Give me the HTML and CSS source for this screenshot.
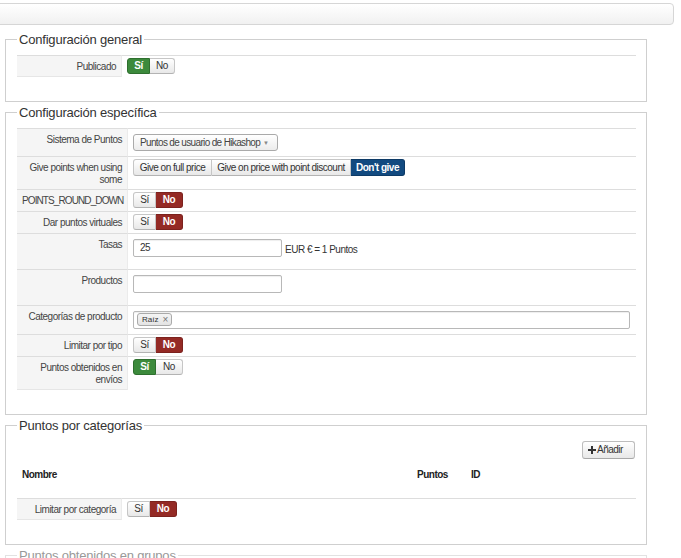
FILE: index.html
```html
<!DOCTYPE html>
<html lang="es">
<head>
<meta charset="utf-8">
<title>Puntos</title>
<link rel="stylesheet" href="styles.css">
</head>
<body>
<div class="topbar"></div>
<div class="page">
  <fieldset class="fs">
    <legend>Configuración general</legend>
    <table class="adm">
      <tr>
        <td class="key k-sm">Publicado</td>
        <td class="val"><span class="grp"><span class="b si on-g">Sí</span><span class="b no no-sm">No</span></span></td>
      </tr>
    </table>
  </fieldset>

  <fieldset class="fs">
    <legend>Configuración específica</legend>
    <table class="adm">
      <tr>
        <td class="key k-lg">Sistema de Puntos</td>
        <td class="val"><span class="select"><span>Puntos de usuario de Hikashop</span><span class="arrow">▼</span></span></td>
      </tr>
      <tr>
        <td class="key k-lg">Give points when using some</td>
        <td class="val"><span class="grp grp-give"><span class="b g1">Give on full price</span><span class="b g2">Give on price with point discount</span><span class="b g3 on-b">Don't give</span></span></td>
      </tr>
      <tr>
        <td class="key k-lg caps">POINTS_ROUND_DOWN</td>
        <td class="val"><span class="grp"><span class="b si">Sí</span><span class="b no on-r">No</span></span></td>
      </tr>
      <tr>
        <td class="key k-lg">Dar puntos virtuales</td>
        <td class="val"><span class="grp"><span class="b si">Sí</span><span class="b no on-r">No</span></span></td>
      </tr>
      <tr>
        <td class="key k-lg">Tasas</td>
        <td class="val"><span class="input">25</span><span class="unit">EUR € = 1 Puntos</span></td>
      </tr>
      <tr>
        <td class="key k-lg">Productos</td>
        <td class="val"><span class="input"></span></td>
      </tr>
      <tr>
        <td class="key k-lg">Categorías de producto</td>
        <td class="val"><span class="input input-wide"><span class="tag">Raíz <span class="x">×</span></span></span></td>
      </tr>
      <tr>
        <td class="key k-lg">Limitar por tipo</td>
        <td class="val"><span class="grp"><span class="b si">Sí</span><span class="b no on-r">No</span></span></td>
      </tr>
      <tr>
        <td class="key k-lg">Puntos obtenidos en envíos</td>
        <td class="val"><span class="grp"><span class="b si on-g">Sí</span><span class="b no">No</span></span></td>
      </tr>
    </table>
  </fieldset>

  <fieldset class="fs">
    <legend>Puntos por categorías</legend>
    <div class="toolbar">
      <span class="btn-add"><svg class="plus" viewBox="0 0 8 8" width="8" height="8" aria-hidden="true"><path d="M3 0h2v3h3v2H5v3H3V5H0V3h3z" fill="#333"/></svg>Añadir</span>
    </div>
    <table class="list">
      <tr>
        <th class="c-name">Nombre</th>
        <th class="c-pts">Puntos</th>
        <th>ID</th>
      </tr>
    </table>
    <table class="adm">
      <tr>
        <td class="key k-sm">Limitar por categoría</td>
        <td class="val"><span class="grp"><span class="b si">Sí</span><span class="b no on-r">No</span></span></td>
      </tr>
    </table>
  </fieldset>

  <fieldset class="fs fs-dim">
    <legend>Puntos obtenidos en grupos</legend>
    <div class="spacer"></div>
  </fieldset>
</div>
</body>
</html>
```

FILE: styles.css
```css
* { box-sizing: border-box; }

body {
  margin: 0;
  background: #fff;
  color: #333;
  font-family: "Liberation Sans", Arial, sans-serif;
  font-size: 10px;
  letter-spacing: -0.5px;
}

.topbar {
  margin: 3px 0 7px -6px;
  width: 680px;
  height: 22px;
  border: 1px solid #d6d6d6;
  border-radius: 4px;
  background: linear-gradient(#ffffff, #f1f1f1);
}

.page {
  padding-left: 5px;
  width: 647px;
}

.fs {
  margin: 0 0 3px;
  padding: 8px 10px 24px 11px;
  border: 1px solid #cfcfcf;
  min-width: 0;
}

.fs legend {
  padding: 0 2px;
  font-size: 13px;
  line-height: 15px;
  letter-spacing: -0.2px;
  color: #333;
}

.fs-dim { border-color: #e2e2e2; }
.fs-dim legend { color: #999; }
.spacer { height: 40px; }

.adm {
  width: 100%;
  table-layout: fixed;
  border-collapse: separate;
  border-spacing: 0;
}

.adm td {
  border-top: 1px solid #dddddd;
  vertical-align: top;
}

.val {
  padding: 2px 5px 3px;
  line-height: 12px;
}

.key {
  background: #f5f5f5;
  border-right: 1px solid #ebebeb;
  text-align: right;
  padding: 5px 5px 3px;
  line-height: 12px;
  color: #444;
}

.key.caps { letter-spacing: -0.9px; }

.adm tr:last-child .key { border-bottom: 1px solid #e6e6e6; }

.k-sm { width: 105px; }
.k-lg { width: 111px; }

/* button groups */
.grp {
  display: inline-flex;
  vertical-align: top;
  white-space: nowrap;
}

.b {
  display: inline-block;
  height: 16px;
  line-height: 14px;
  text-align: center;
  white-space: nowrap;
  color: #333;
  border: 1px solid #c6c6c6;
  border-bottom-color: #b3b3b3;
  background: linear-gradient(#ffffff, #e8e8e8);
}

.b:first-child { border-radius: 3px 0 0 3px; }
.b:last-child { border-radius: 0 3px 3px 0; }
.b + .b { border-left: none; }

.si { width: 23px; }
.no { width: 27px; }
.no-sm { width: 25px; }

.on-g, .on-r, .on-b {
  color: #fff;
  font-weight: bold;
}
.on-g { background: #3c8a3c; border-color: #2e6f2e; }
.on-r { background: #942a25; border-color: #7c221e; }
.on-b { background: #124a80; border-color: #0d3a66; }

.grp-give { margin-bottom: 9px; }
.grp-give .b { height: 17px; line-height: 15px; }
.g1 { width: 79px; }
.g2 { width: 139px; }
.g3 { width: 54px; }

/* select */
.select {
  display: inline-flex;
  justify-content: space-between;
  align-items: center;
  width: 145px;
  height: 17px;
  margin: 3px 0 2px;
  padding: 0 8px 0 6px;
  border: 1px solid #aaaaaa;
  border-radius: 3px;
  background: linear-gradient(#ffffff, #ececec);
  color: #444;
  letter-spacing: -0.65px;
  white-space: nowrap;
  vertical-align: top;
}

.arrow {
  font-size: 6px;
  letter-spacing: 0;
  color: #888;
}

/* inputs */
.input {
  display: inline-block;
  vertical-align: top;
  width: 149px;
  height: 18px;
  margin: 3px 0 9px;
  padding: 0 6px;
  line-height: 16px;
  border: 1px solid #b8b8b8;
  border-radius: 2px;
  box-shadow: inset 0 1px 1px rgba(0, 0, 0, 0.07);
  color: #333;
}

.input-wide {
  width: 497px;
  margin-bottom: 2px;
  padding: 1px 3px;
  line-height: 11px;
}

.unit {
  display: inline-block;
  margin: 8px 0 0 3px;
  vertical-align: top;
  color: #333;
  white-space: nowrap;
}

.tag {
  display: inline-flex;
  align-items: center;
  height: 13px;
  padding: 0 3px 0 4px;
  border: 1px solid #aaaaaa;
  border-radius: 3px;
  background: linear-gradient(#f4f4f4, #e4e4e4);
  font-size: 8px;
  letter-spacing: 0;
  color: #333;
}

.tag .x {
  margin-left: 4px;
  font-size: 10px;
  color: #777;
}

/* toolbar */
.toolbar {
  padding-top: 0;
  text-align: right;
  line-height: 12px;
}

.btn-add {
  display: inline-flex;
  align-items: center;
  width: 53px;
  height: 18px;
  margin-right: 1px;
  padding-left: 5px;
  border: 1px solid #bdbdbd;
  border-bottom-color: #a8a8a8;
  border-radius: 3px;
  background: linear-gradient(#ffffff, #e8e8e8);
  color: #333;
}

.plus { margin-right: 1px; }

.list {
  width: 100%;
  border-collapse: collapse;
}

.list th {
  text-align: left;
  font-weight: bold;
  color: #222;
  padding: 10px 5px 17px;
  line-height: 12px;
}

.c-name { width: 395px; }
.c-pts { width: 54px; }
```
